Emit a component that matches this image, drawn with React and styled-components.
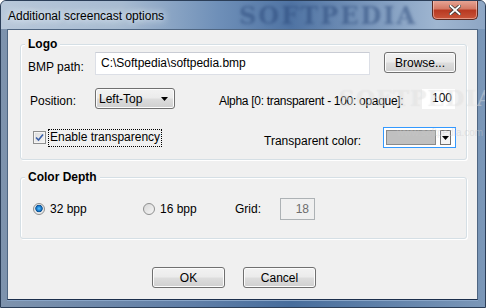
import styled, { createGlobalStyle } from 'styled-components';

const Global = createGlobalStyle`
	html, body {
		margin: 0;
		padding: 0;
		background: #ffffff;
	}
	body {
		font-family: 'Liberation Sans', 'DejaVu Sans', sans-serif;
		font-size: 12px;
		color: #000;
	}
`;

const Check = () => (
	<svg width="9" height="9" viewBox="0 0 9 9">
		<path d="M1 4.5 L3.5 7 L8 1.5" fill="none" stroke="#3a5fa8" strokeWidth="1.6" />
	</svg>
);

const Arrow = () => (
	<svg width="7" height="4" viewBox="0 0 7 4">
		<path d="M0 0 H7 L3.5 4 Z" fill="#000" />
	</svg>
);

const App = () => {
	return (
		<>
			<Global />
			<S.Window>
				<S.TitleBar>
					<S.Title>Additional screencast options</S.Title>
					<S.TitleMark>SOFTPEDIA</S.TitleMark>
					<S.CloseBtn>
						<svg width="12" height="10" viewBox="0 0 12 10">
							<path d="M1.5 1 L10.5 9 M10.5 1 L1.5 9" stroke="#3b3b3b" strokeWidth="3.4" strokeLinecap="square" />
							<path d="M1.5 1 L10.5 9 M10.5 1 L1.5 9" stroke="#ffffff" strokeWidth="1.8" strokeLinecap="square" />
						</svg>
					</S.CloseBtn>
				</S.TitleBar>
				<S.Client>
					<S.Group $height={116}>
						<S.Legend>Logo</S.Legend>
						<S.Row $h={23}>
							<S.Label $w={67} $dy={3}>BMP path:</S.Label>
							<S.Input $w={275}>C:\Softpedia\softpedia.bmp</S.Input>
							<S.Button $w={72} $ml={14} $self="flex-start">Browse...</S.Button>
						</S.Row>
						<S.Row $h={21} $mt={13}>
							<S.Label $w={65} $ml={2} $dy={2}>Position:</S.Label>
							<S.Select>
								<span>Left-Top</span>
								<Arrow />
							</S.Select>
							<S.Label $ml={44} $dy={2} $tight>Alpha [0: transparent - 100: opaque]:</S.Label>
							<S.Edit $w={33}>100</S.Edit>
						</S.Row>
						<S.Row $h={21} $mt={18}>
							<S.CheckBox>
								<Check />
							</S.CheckBox>
							<S.Focus>Enable transparency</S.Focus>
							<S.Label $ml="auto" $dy={3}>Transparent color:</S.Label>
							<S.ColorPicker>
								<S.Swatch />
								<S.DropBtn>
									<Arrow />
								</S.DropBtn>
							</S.ColorPicker>
						</S.Row>
						<S.Mark>SOFTPEDIA</S.Mark>
						<S.SmallMark>www.softpedia.com</S.SmallMark>
					</S.Group>
					<S.Group $height={62} $mt={17}>
						<S.Legend>Color Depth</S.Legend>
						<S.Row $h={22} $mt={13}>
							<S.Radio $on $ml={5} />
							<S.Label $ml={5} $w={93}>32 bpp</S.Label>
							<S.Radio />
							<S.Label $ml={5} $w={75}>16 bpp</S.Label>
							<S.Label $w={45}>Grid:</S.Label>
							<S.Disabled>18</S.Disabled>
						</S.Row>
					</S.Group>
					<S.Buttons>
						<S.Button $w={73}>OK</S.Button>
						<S.Button $w={73}>Cancel</S.Button>
					</S.Buttons>
				</S.Client>
			</S.Window>
		</>
	);
};
export default App;

const Window = styled.div`
	width: 486px;
	height: 308px;
	box-sizing: border-box;
	display: flex;
	flex-direction: column;
	background: linear-gradient(90deg, #7e93ad 0%, #5f7ea7 40%, #476d9c 60%, #7b97b8 100%);
	border: 1px solid #2b3e58;
	border-radius: 6px 6px 0 0;
	overflow: hidden;
`;

const TitleBar = styled.div`
	position: relative;
	height: 28px;
	display: flex;
	align-items: flex-start;
	padding-left: 7px;
	background: linear-gradient(90deg, #b8c8da 0%, #a7bbd1 25%, #6e8fb8 45%, #4f73a3 60%, #9fb6d1 90%, #8ea6c4 100%);
`;

const Title = styled.div`
	position: relative;
	z-index: 1;
	margin-top: 8px;
	font-size: 12px;
	color: #000;
	text-shadow: 0 0 6px #e6eef7, 0 0 10px #e6eef7;
`;

const TitleMark = styled.div`
	position: absolute;
	left: 238px;
	top: 2px;
	font-family: 'DejaVu Serif', serif;
	font-weight: bold;
	font-size: 24px;
	line-height: 26px;
	letter-spacing: 2px;
	color: rgba(40, 70, 120, 0.5);
	filter: blur(1.5px);
	white-space: nowrap;
`;

const CloseBtn = styled.div`
	position: relative;
	z-index: 1;
	margin-left: auto;
	margin-right: 7px;
	margin-top: -1px;
	width: 46px;
	height: 20px;
	box-sizing: border-box;
	border: 1px solid #5a2a22;
	border-top: none;
	border-radius: 0 0 5px 5px;
	display: flex;
	align-items: center;
	justify-content: center;
	background: linear-gradient(180deg, #e9a99a 0%, #d47a66 45%, #b83a22 55%, #c9553a 100%);
	box-shadow: inset 0 0 0 1px rgba(255, 220, 210, 0.5);
`;

const Client = styled.div`
	height: 271px;
	margin: 0 7px 0 6px;
	box-sizing: border-box;
	background: #f0f0f0;
	border: 1px solid #4f6682;
	padding: 0 10px 0 12px;
	display: flex;
	flex-direction: column;
	border-bottom: 1px solid #1c2f4c;
	box-shadow: 0 1px 0 #8aa6c8;
`;

const Group = styled.div`
	position: relative;
	margin-top: ${(p) => p.$mt ?? 14}px;
	height: ${(p) => p.$height}px;
	box-sizing: border-box;
	border: 1px solid #d5dfe5;
	border-radius: 3px;
	box-shadow: inset 1px 1px 0 #ffffff, 1px 1px 0 #ffffff;
	padding: 7px 10px 0 7px;
	display: flex;
	flex-direction: column;
`;

const Legend = styled.div`
	position: absolute;
	top: -9px;
	left: 4px;
	padding: 0 3px;
	background: #f0f0f0;
	font-weight: bold;
	font-size: 12px;
	line-height: 16px;
	color: #000;
`;

const Row = styled.div`
	display: flex;
	align-items: center;
	height: ${(p) => p.$h}px;
	margin-top: ${(p) => p.$mt ?? 0}px;
`;

const Label = styled.div`
	width: ${(p) => (p.$w ? `${p.$w}px` : 'auto')};
	margin-left: ${(p) => (p.$ml === 'auto' ? 'auto' : `${p.$ml ?? 0}px`)};
	letter-spacing: ${(p) => (p.$tight ? '-0.3px' : 'normal')};
	flex-shrink: 0;
	white-space: nowrap;
	position: relative;
	top: ${(p) => p.$dy ?? 0}px;
`;

const Input = styled.div`
	width: ${(p) => p.$w}px;
	height: 23px;
	box-sizing: border-box;
	background: #fff;
	border: 1px solid #dcdfe6;
	border-top-color: #c9ccd4;
	padding: 3px 0 0 5px;
	font-size: 12px;
`;

const Edit = styled.div`
	width: ${(p) => p.$w}px;
	height: 20px;
	margin-left: auto;
	margin-right: 1px;
	flex-shrink: 0;
	box-sizing: border-box;
	background: #fff;
	text-align: right;
	padding: 2px 3px 0 0;
`;

const Button = styled.div`
	width: ${(p) => p.$w}px;
	height: 21px;
	margin-left: ${(p) => p.$ml ?? 0}px;
	align-self: ${(p) => p.$self ?? 'auto'};
	flex-shrink: 0;
	box-sizing: border-box;
	border: 1px solid #707070;
	border-radius: 3px;
	background: linear-gradient(180deg, #f2f2f2 0%, #ebebeb 48%, #dddddd 52%, #cfcfcf 100%);
	box-shadow: inset 0 0 0 1px #fcfcfc;
	display: flex;
	align-items: center;
	justify-content: center;
	font-size: 12px;
`;

const Select = styled.div`
	width: 80px;
	height: 21px;
	box-sizing: border-box;
	border: 1px solid #707070;
	border-radius: 3px;
	background: linear-gradient(180deg, #f2f2f2 0%, #ebebeb 48%, #dddddd 52%, #cfcfcf 100%);
	box-shadow: inset 0 0 0 1px #fcfcfc;
	display: flex;
	align-items: center;
	justify-content: space-between;
	padding: 0 6px 0 3px;
`;

const CheckBox = styled.div`
	width: 13px;
	height: 13px;
	margin-left: 5px;
	box-sizing: border-box;
	border: 1px solid #8e8f8f;
	background: linear-gradient(135deg, #dcdcdc 0%, #f4f4f4 100%);
	box-shadow: inset 0 0 0 1px #f4f4f4;
	display: flex;
	align-items: center;
	justify-content: center;
`;

const Focus = styled.div`
	margin-left: 2px;
	padding: 1px 1px 2px 1px;
	border: 1px dotted #000;
	line-height: 13px;
	white-space: nowrap;
`;

const ColorPicker = styled.div`
	width: 73px;
	height: 21px;
	margin-left: 22px;
	box-sizing: border-box;
	border: 1px solid #3399ff;
	background: #fff;
	display: flex;
	align-items: center;
	padding: 2px;
	gap: 4px;
`;

const Swatch = styled.div`
	width: 50px;
	height: 15px;
	box-sizing: border-box;
	border: 1px solid #8a8a8a;
	background: #c0c0c0;
`;

const DropBtn = styled.div`
	width: 11px;
	height: 15px;
	box-sizing: border-box;
	border: 1px solid #707070;
	background: #f4f4f4;
	display: flex;
	align-items: center;
	justify-content: center;
`;

const Radio = styled.div`
	width: 12px;
	height: 12px;
	margin-left: ${(p) => p.$ml ?? 0}px;
	box-sizing: border-box;
	border-radius: 50%;
	border: 1px solid #8e8f8f;
	background: ${(p) =>
		p.$on
			? 'radial-gradient(circle at 50% 45%, #5ac3ff 0%, #1a7ed1 30%, #0b4f8f 45%, #e8e8e8 55%, #f6f6f6 100%)'
			: 'linear-gradient(135deg, #d8d8d8 0%, #f6f6f6 100%)'};
	flex-shrink: 0;
`;

const Disabled = styled.div`
	width: 35px;
	height: 22px;
	box-sizing: border-box;
	border: 1px solid #adb2b5;
	background: #f0f0f0;
	color: #6d6d6d;
	text-align: right;
	padding: 3px 5px 0 0;
`;

const Buttons = styled.div`
	display: flex;
	gap: 18px;
	margin-top: 28px;
	padding-left: 132px;
`;

const Mark = styled.div`
	position: absolute;
	top: 40px;
	left: 318px;
	font-family: 'DejaVu Serif', serif;
	font-weight: bold;
	font-size: 22px;
	letter-spacing: 1px;
	color: rgba(255, 255, 255, 0.28);
	text-shadow: 0 0 1px rgba(170, 170, 170, 0.25);
	pointer-events: none;
	white-space: nowrap;
`;

const SmallMark = styled.div`
	position: absolute;
	top: 82px;
	left: 376px;
	font-size: 10px;
	color: rgba(200, 200, 200, 0.45);
	pointer-events: none;
	white-space: nowrap;
`;

const S = {
	Window,
	TitleBar,
	Title,
	TitleMark,
	CloseBtn,
	Client,
	Group,
	Legend,
	Row,
	Label,
	Input,
	Edit,
	Button,
	Select,
	CheckBox,
	Focus,
	ColorPicker,
	Swatch,
	DropBtn,
	Radio,
	Disabled,
	Buttons,
	Mark,
	SmallMark,
};
